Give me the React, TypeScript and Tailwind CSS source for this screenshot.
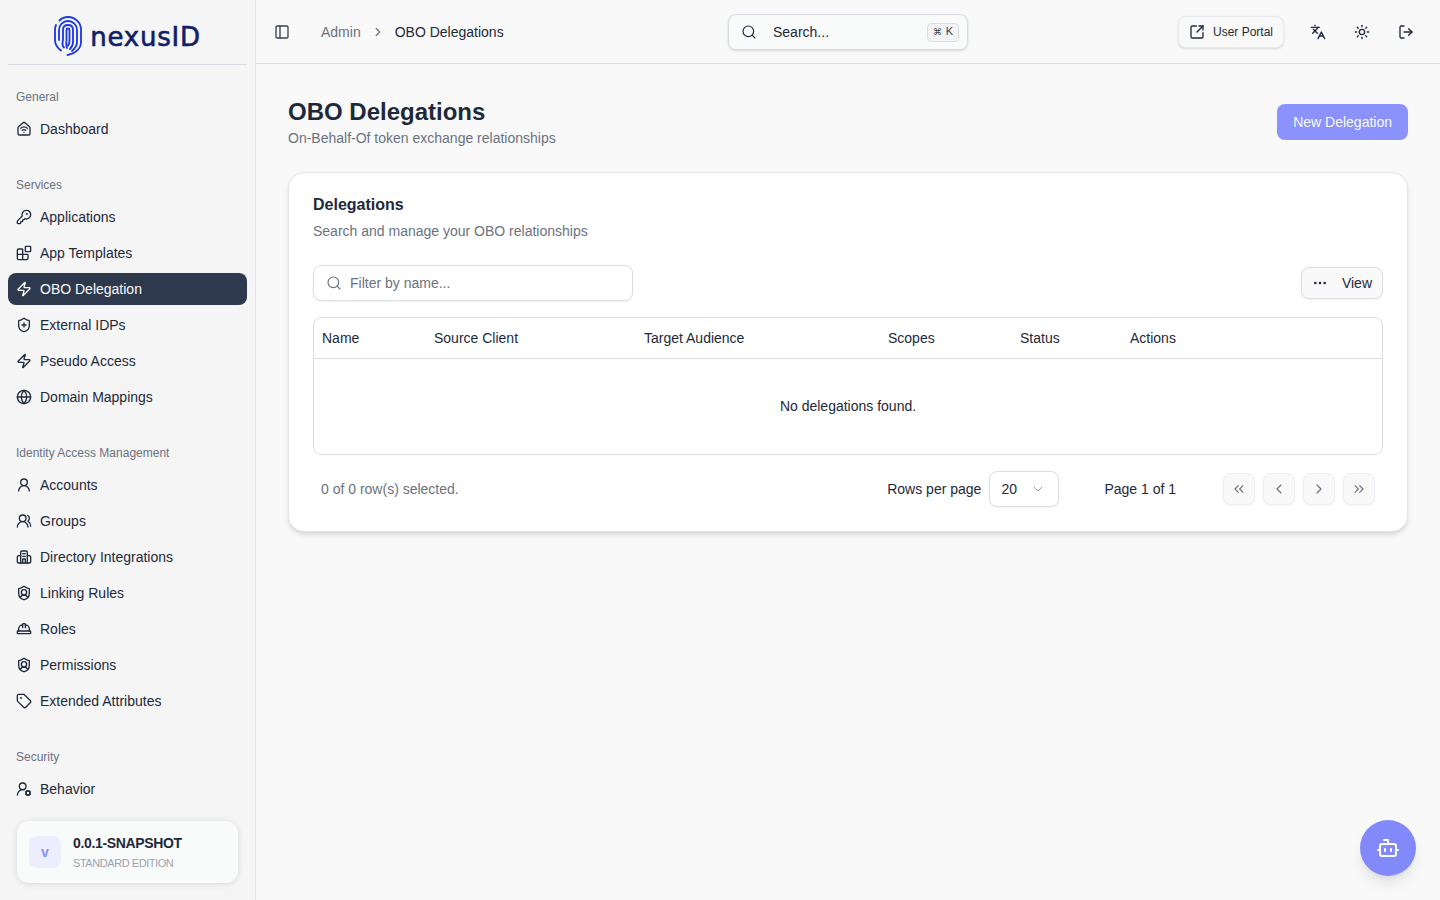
import {
  Blocks,
  Bot,
  ChevronDown,
  ChevronLeft,
  ChevronRight,
  ChevronsLeft,
  ChevronsRight,
  Ellipsis,
  Globe,
  HardHat,
  HouseWifi,
  KeyRound,
  Languages,
  LogOut,
  PanelLeft,
  Search,
  ShieldPlus,
  ShieldUser,
  SquareArrowOutUpRight,
  Sun,
  Tag,
  UserRound,
  UserRoundCog,
  UsersRound,
  Zap,
} from "lucide-react"

function DirectoryIcon({ className, strokeWidth }: { className?: string; strokeWidth?: number }) {
  return (
    <svg viewBox="0 0 24 24" className={className} fill="none" stroke="currentColor" strokeWidth={strokeWidth} strokeLinecap="round" strokeLinejoin="round">
      <path d="M7 21V5a2 2 0 0 1 2-2h6a2 2 0 0 1 2 2v16" />
      <path d="M7 10H4a2 2 0 0 0-2 2v7a2 2 0 0 0 2 2h16a2 2 0 0 0 2-2v-7a2 2 0 0 0-2-2h-3" />
      <path d="M10 7h4M10 11h4M10 21v-6h4v6" />
    </svg>
  )
}

const groups = [
  { label: "General", items: [{ name: "Dashboard", icon: HouseWifi }] },
  {
    label: "Services",
    items: [
      { name: "Applications", icon: KeyRound },
      { name: "App Templates", icon: Blocks },
      { name: "OBO Delegation", icon: Zap, active: true },
      { name: "External IDPs", icon: ShieldPlus },
      { name: "Pseudo Access", icon: Zap },
      { name: "Domain Mappings", icon: Globe },
    ],
  },
  {
    label: "Identity Access Management",
    items: [
      { name: "Accounts", icon: UserRound },
      { name: "Groups", icon: UsersRound },
      { name: "Directory Integrations", icon: DirectoryIcon },
      { name: "Linking Rules", icon: ShieldUser },
      { name: "Roles", icon: HardHat },
      { name: "Permissions", icon: ShieldUser },
      { name: "Extended Attributes", icon: Tag },
    ],
  },
  { label: "Security", items: [{ name: "Behavior", icon: UserRoundCog }] },
]

function Logo() {
  return (
    <div className="flex items-center gap-[8px]">
      <svg viewBox="0 0 28 40" className="h-10 w-7" fill="none" stroke="#1a36e6" strokeWidth="1.8" strokeLinecap="round">
        <path d="M5.500 4.500C8 2 11 1 14 1c7 0 13 5.500 13 12.500V26c0 6-5 11-13.500 13" />
        <path d="M2 9C1.300 10.500 1 12 1 14v10c0 4.500 2.500 8 6 10.500" />
        <path d="M5 24V14c0-5 4-9 9-9s9 4 9 9v12c0 4-2 6.500-5 9" />
        <path d="M10 31.500C7 29 9 26.500 9 23V14c0-3 2-5 5-5s5 2 5 5v12c0 3-1 5-3 7" />
        <path d="M13 32c-1.500-2.500-.500-5-.5-8V14c0-1 .6-1.500 1.500-1.500s1.500 .5 1.500 1.500v11c0 2-.5 3.500-1.500 4.500" />
      </svg>
      <span className="mt-[2px] font-['DejaVu_Sans',sans-serif] text-[26px] leading-none tracking-[0.03em] text-[#0f2167] [-webkit-text-stroke:0.6px_#0f2167]">nexusID</span>
    </div>
  )
}

function Sidebar() {
  return (
    <aside className="flex h-full w-[256px] shrink-0 flex-col border-r border-[#e2e4ea] bg-[#f5f5f5]">
      <div className="mx-2 flex h-[65px] shrink-0 items-center justify-center border-b border-[#d9dde5] pt-2">
        <Logo />
      </div>
      <nav className="min-h-0 flex-1 overflow-hidden px-2 pt-4">
        {groups.map((g) => (
          <div key={g.label} className="mb-6">
            <div className="flex h-8 items-center px-2 text-xs text-[#6b7280]">{g.label}</div>
            <div className="flex flex-col gap-1">
              {g.items.map((item) => (
                <div
                  key={item.name}
                  className={
                    item.active
                      ? "flex h-8 items-center gap-2 rounded-lg bg-[#2f394d] px-2 text-sm font-medium text-[#f8fafc]"
                      : "flex h-8 items-center gap-2 rounded-lg px-2 text-sm text-[#1e293b]"
                  }
                >
                  <item.icon className="h-4 w-4 shrink-0" strokeWidth={2} />
                  <span>{item.name}</span>
                </div>
              ))}
            </div>
          </div>
        ))}
      </nav>
      <div className="shrink-0 px-[17px] pb-[17px]">
        <div className="flex h-[62px] items-center gap-3 rounded-xl bg-[#f9fafa] px-3 shadow-[0_1px_6px_rgba(0,0,0,0.12)]">
          <div className="flex h-8 w-8 items-center justify-center rounded-lg bg-[#eceefe] text-sm font-bold text-[#858ffa]">v</div>
          <div>
            <div className="text-sm leading-5 font-semibold tracking-tight text-[#1e293b]">0.0.1-SNAPSHOT</div>
            <div className="mt-[2px] text-[11px] leading-4 tracking-[-0.04em] text-[#9ca3af]">STANDARD EDITION</div>
          </div>
        </div>
      </div>
    </aside>
  )
}

function Topbar() {
  return (
    <header className="relative flex h-16 shrink-0 items-center border-b border-[#dcdee5] pr-4 pl-[18px]">
      <PanelLeft className="h-4 w-4 text-[#374151]" strokeWidth={2} />
      <div className="ml-[31px] flex items-center text-sm">
        <span className="text-[#6b7280]">Admin</span>
        <ChevronRight className="mx-[10px] h-[14px] w-[14px] text-[#6b7280]" />
        <span className="text-[#1e293b]">OBO Delegations</span>
      </div>
      <div className="absolute top-[14px] left-[472px] flex h-9 w-60 items-center rounded-lg border border-[#dcdee5] bg-[#f9fafa] pr-2 pl-3 text-sm text-[#1e293b] shadow-sm">
        <Search className="h-4 w-4" strokeWidth={1.75} />
        <span className="ml-4 flex-1">Search...</span>
        <span className="flex h-[19px] w-8 items-center justify-center gap-1 rounded border border-[#dcdee5] bg-[#f3f4f6] text-[11px] font-medium text-[#374151]">
          <span className="text-[9px]">⌘</span>K
        </span>
      </div>
      <div className="ml-auto flex items-center">
        <div className="mr-[16px] flex h-8 items-center gap-2 rounded-lg border border-[#eaebef] bg-[#f9f9f9] px-[10px] text-xs font-medium text-[#1e293b] shadow-sm">
          <SquareArrowOutUpRight className="h-4 w-4" strokeWidth={2} />
          User Portal
        </div>
        <div className="flex h-9 w-9 items-center justify-center text-[#1e293b]"><Languages className="h-4 w-4" strokeWidth={2} /></div>
        <div className="ml-2 flex h-9 w-9 items-center justify-center text-[#1e293b]"><Sun className="h-4 w-4" strokeWidth={2} /></div>
        <div className="ml-2 flex h-9 w-9 items-center justify-center text-[#1e293b]"><LogOut className="h-4 w-4" strokeWidth={2} /></div>
      </div>
    </header>
  )
}

function PageButton({ children }: { children: React.ReactNode }) {
  return (
    <div className="flex h-8 w-8 items-center justify-center rounded-lg border border-[#eceef1] bg-[#f9f9f9] text-[#6b7280] shadow-xs">
      {children}
    </div>
  )
}

const columns = [
  { name: "Name", w: "w-[112px]" },
  { name: "Source Client", w: "w-[210px]" },
  { name: "Target Audience", w: "w-[244px]" },
  { name: "Scopes", w: "w-[132px]" },
  { name: "Status", w: "w-[110px]" },
  { name: "Actions", w: "" },
]

function DelegationsCard() {
  return (
    <section className="h-[360px] rounded-2xl border border-[#e2e4ea] bg-white px-6 pt-[22px] shadow-md">
      <h2 className="text-base leading-5 font-semibold text-[#1e293b]">Delegations</h2>
      <p className="mt-[6px] text-sm leading-5 text-[#6b7280]">Search and manage your OBO relationships</p>
      <div className="mt-6 flex items-center justify-between">
        <div className="flex h-9 w-80 items-center gap-2 rounded-lg border border-[#dcdee5] bg-white px-3 text-sm text-[#6b7280] shadow-xs">
          <Search className="h-4 w-4" strokeWidth={1.75} />
          Filter by name...
        </div>
        <div className="flex h-8 items-center gap-[14px] rounded-lg border border-[#dcdee5] bg-[#f9f9f9] pr-2.5 pl-[10px] text-sm text-[#1e293b] shadow-xs">
          <Ellipsis className="h-4 w-4" />
          View
        </div>
      </div>
      <div className="mt-4 overflow-hidden rounded-lg border border-[#dcdee5]">
        <table className="w-full table-fixed text-sm text-[#1e293b]">
          <thead>
            <tr className="h-10 border-b border-[#dcdee5]">
              {columns.map((c) => (
                <th key={c.name} className={`px-2 text-left font-normal ${c.w}`}>{c.name}</th>
              ))}
            </tr>
          </thead>
          <tbody>
            <tr>
              <td colSpan={6} className="h-24 text-center text-sm">No delegations found.</td>
            </tr>
          </tbody>
        </table>
      </div>
      <div className="mt-4 flex items-center px-2 text-sm">
        <span className="flex-1 text-[#6b7280]">0 of 0 row(s) selected.</span>
        <span className="text-[#1e293b]">Rows per page</span>
        <div className="ml-2 flex h-9 w-[70px] items-center justify-between rounded-lg border border-[#dcdee5] bg-white pr-3 pl-[11px] text-[#1e293b] shadow-xs">
          20
          <ChevronDown className="h-4 w-4 text-[#9ca3af]" strokeWidth={1.5} />
        </div>
        <span className="mr-[47px] ml-[45px] text-[#1e293b]">Page 1 of 1</span>
        <div className="flex gap-2">
          <PageButton><ChevronsLeft className="h-4 w-4" strokeWidth={1.75} /></PageButton>
          <PageButton><ChevronLeft className="h-4 w-4" strokeWidth={1.75} /></PageButton>
          <PageButton><ChevronRight className="h-4 w-4" strokeWidth={1.75} /></PageButton>
          <PageButton><ChevronsRight className="h-4 w-4" strokeWidth={1.75} /></PageButton>
        </div>
      </div>
    </section>
  )
}

export default function App() {
  return (
    <div className="flex h-[900px] w-full overflow-hidden bg-[#f9f9f9] font-['Liberation_Sans',sans-serif]">
      <Sidebar />
      <main className="flex min-w-0 flex-1 flex-col">
        <Topbar />
        <div className="px-8 pt-8">
          <div className="mb-6 flex items-center justify-between">
            <div>
              <h1 className="text-2xl leading-8 font-semibold text-[#1e293b]">OBO Delegations</h1>
              <p className="text-sm leading-5 text-[#6b7280]">On-Behalf-Of token exchange relationships</p>
            </div>
            <div className="flex h-9 items-center rounded-lg bg-[#8b92fb] px-4 text-sm font-medium text-[#f8fafc]">New Delegation</div>
          </div>
          <DelegationsCard />
        </div>
      </main>
      <div className="fixed right-6 bottom-6 flex h-14 w-14 items-center justify-center rounded-full bg-[#8189fb] text-white shadow-lg">
        <Bot className="h-6 w-6" strokeWidth={2} />
      </div>
    </div>
  )
}
